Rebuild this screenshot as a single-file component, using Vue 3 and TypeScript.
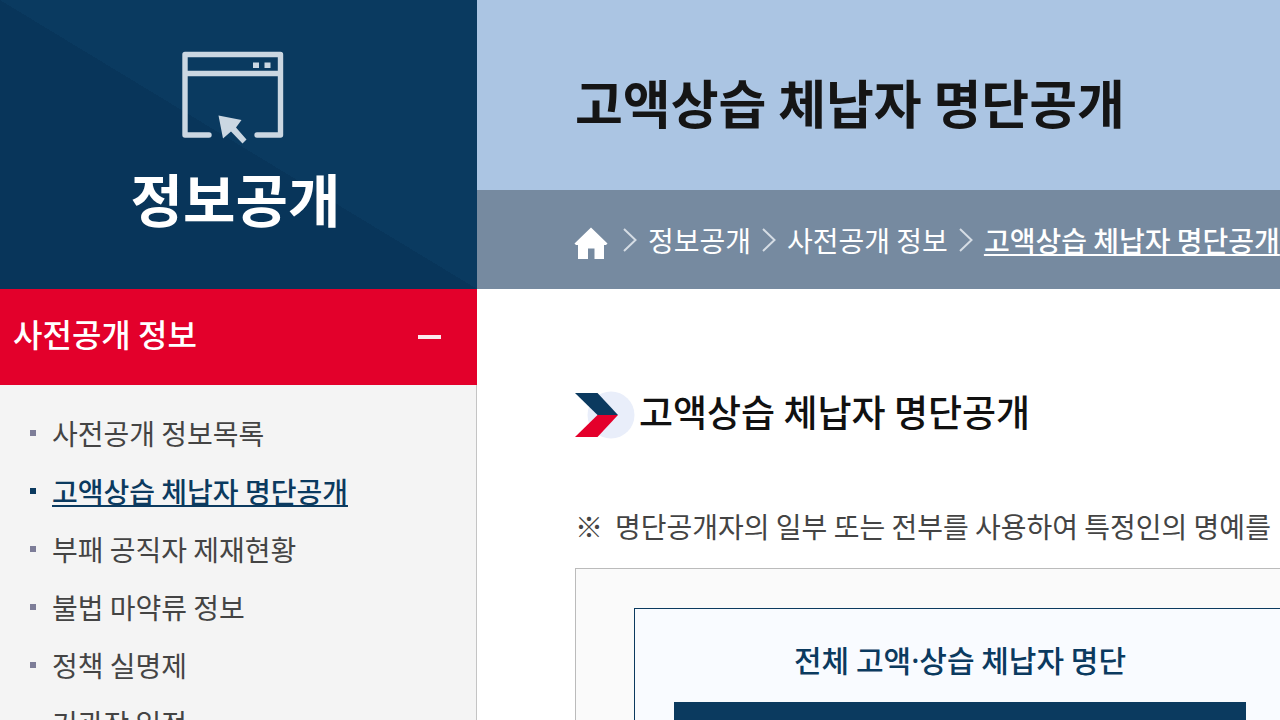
<script setup lang="ts">
interface MenuItem {
  label: string
  current?: boolean
}

const menu: MenuItem[] = [
  { label: '사전공개 정보목록' },
  { label: '고액상습 체납자 명단공개', current: true },
  { label: '부패 공직자 제재현황' },
  { label: '불법 마약류 정보' },
  { label: '정책 실명제' },
  { label: '기관장 일정' },
]

const trail: MenuItem[] = [
  { label: '정보공개' },
  { label: '사전공개 정보' },
  { label: '고액상습 체납자 명단공개', current: true },
]
</script>

<template>
  <div class="page">
    <aside class="side">
      <div class="side-head">
        <svg class="side-icon" width="104" height="96" viewBox="0 0 104 96" aria-hidden="true">
          <g fill="none" stroke="#cbd7e2" stroke-width="5.4" stroke-linecap="round" stroke-linejoin="round">
            <path d="M28 85H4V4.500H99.500V85H76" />
            <path d="M4 23.500H99.500" stroke-linecap="butt" />
          </g>
          <path fill="#cbd7e2" d="M72 12.500h6v5.500h-6zM83.500 12.500h6v5.500h-6zM37.500 65.500L60.500 70 55 77.500 65.500 89.500 61.500 93.500 50 81.500 42 88.500z" />
        </svg>
        <h2 class="side-title">정보공개</h2>
      </div>
      <nav class="side-nav" aria-label="정보공개">
        <button class="category" type="button" aria-expanded="true">
          <span class="category-label">사전공개 정보</span>
          <span class="minus"></span>
        </button>
        <ul class="menu">
          <li v-for="item in menu" :key="item.label" :class="{ current: item.current }">
            <a href="#">{{ item.label }}</a>
          </li>
        </ul>
      </nav>
    </aside>

    <main class="main">
      <header class="banner">
        <h1>고액상습 체납자 명단공개</h1>
      </header>
      <nav class="crumbs" aria-label="현재 위치">
        <a class="home" href="#" aria-label="홈">
          <svg width="34" height="34" viewBox="0 0 34 34" aria-hidden="true">
            <path fill="#fff" d="M17 1.500L33.500 17.500 32 19H30V33H20.500V22.500H14V33H4V19H2L.5 17.500z" />
          </svg>
        </a>
        <template v-for="item in trail" :key="item.label">
          <svg class="chevron" width="14" height="24" viewBox="0 0 14 24" aria-hidden="true">
            <path d="M1 1L12.500 12 1 23" fill="none" stroke="#d5dce4" stroke-width="2" />
          </svg>
          <a href="#" :class="{ current: item.current }">{{ item.label }}</a>
        </template>
      </nav>
      <section class="content">
        <h3 class="heading">
          <svg width="60" height="48" viewBox="0 0 60 48" aria-hidden="true">
            <circle cx="36" cy="24" r="23.500" fill="#e9eefa" />
            <path d="M0 2H22.500L43 24H22.500z" fill="#0b3a5f" />
            <path d="M22.500 24H43L22.500 46H0z" fill="#e4002b" />
          </svg>
          <span class="heading-label">고액상습 체납자 명단공개</span>
        </h3>
        <p class="note"><span class="mark">※</span>명단공개자의 일부 또는 전부를 사용하여 특정인의 명예를</p>
        <div class="panel">
          <div class="card">
            <h4>전체 고액<span class="dot">·</span>상습 체납자 명단</h4>
            <div class="bar"></div>
          </div>
        </div>
      </section>
    </main>
  </div>
</template>

<style>
body {
  margin: 0;
}
</style>

<style scoped>
.page {
  display: flex;
  height: 100vh;
  overflow: hidden;
  background: #fff;
  font-family: "Noto Sans CJK KR", "Noto Sans", sans-serif;
  font-size: 28px;
  color: #444;
  white-space: nowrap;
}
h1, h2, h3, h4, p, ul {
  margin: 0;
  padding: 0;
}
a {
  color: inherit;
  text-decoration: none;
}
.current a,
a.current {
  font-weight: 500;
  text-decoration: underline;
  text-decoration-thickness: 2px;
  text-underline-offset: 2px;
}
.side {
  display: flex;
  flex: 0 0 477px;
  flex-direction: column;
}
.side-head {
  display: flex;
  flex: 0 0 289px;
  flex-direction: column;
  align-items: center;
  box-sizing: border-box;
  padding: 50px 6px 0 0;
  background: linear-gradient(to top right, #08355a 50%, #0a3a60 50%);
}
.side-icon {
  margin-right: 6px;
}
.side-title {
  margin-top: 9px;
  font-size: 57px;
  line-height: 84px;
  font-weight: 700;
  color: #fff;
}
.side-nav {
  display: flex;
  flex: 1;
  flex-direction: column;
}
.category {
  display: flex;
  flex: 0 0 96px;
  align-items: center;
  justify-content: space-between;
  padding: 0 36px 0 13px;
  border: 0;
  background: #e3002b;
  color: #fff;
  font-family: inherit;
  font-size: 32px;
  font-weight: 500;
}
.category-label,
.heading-label {
  padding-bottom: 8px;
}
.minus {
  width: 23px;
  height: 4px;
  background: #fbe9ed;
}
.menu {
  flex: 1;
  padding: 19px 0 0 30px;
  border-right: 1px solid #c4c4c4;
  background: #f4f4f4;
  list-style: none;
}
.menu li {
  display: flex;
  align-items: center;
  gap: 16px;
  height: 58px;
}
.menu li::before {
  content: "";
  width: 6px;
  height: 6px;
  background: #7d7d98;
}
.menu .current {
  color: #0b3a5f;
}
.menu .current::before {
  background: #0b3a5f;
}
.main {
  flex: 1;
  min-width: 0;
}
.banner {
  display: flex;
  align-items: center;
  height: 190px;
  padding-left: 98px;
  background: #abc5e3;
}
.banner h1 {
  padding-top: 14px;
  font-size: 52px;
  line-height: 78px;
  font-weight: 700;
  color: #151515;
}
.crumbs {
  display: flex;
  align-items: center;
  height: 99px;
  padding-left: 97px;
  background: #768aa0;
  color: #fff;
}
.home {
  display: flex;
  padding-top: 6px;
}
.chevron {
  flex: none;
  margin: 0 11px;
}
.home + .chevron {
  margin-left: 15px;
}
.content {
  padding: 102px 0 0 98px;
}
.heading {
  display: flex;
  align-items: center;
  gap: 4px;
  height: 48px;
  font-size: 37px;
  font-weight: 500;
  color: #111;
}
.note {
  margin-top: 66px;
  line-height: 42px;
}
.mark {
  margin-right: 12px;
}
.panel {
  display: flex;
  margin-top: 21px;
  padding: 39px 0 39px 58px;
  border: 1px solid #bbb;
  border-right: 0;
  background: #fafafa;
}
.card {
  flex: 0 0 572px;
  padding: 28px 39px 39px;
  border: 1px solid #0b3a5f;
  background: #f9fbff;
}
.card h4 {
  font-size: 30px;
  line-height: 44px;
  font-weight: 500;
  text-align: center;
  color: #0b3a5f;
}
.dot {
  font-family: "Noto Sans", sans-serif;
}
.bar {
  height: 80px;
  margin-top: 19px;
  background: #0b3a5f;
}
</style>
